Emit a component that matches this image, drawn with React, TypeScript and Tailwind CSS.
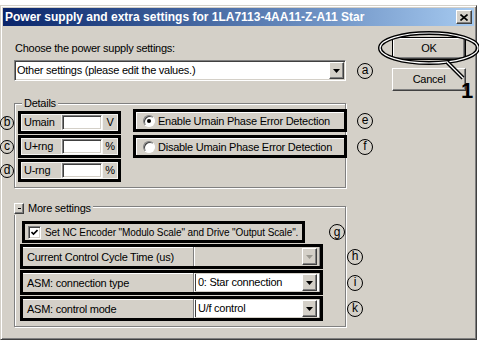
import React from 'react';

// classic 3D borders
const raised =
    'border border-t-white border-l-white border-b-[#404040] border-r-[#404040] shadow-[inset_-1px_-1px_0_#808080,inset_1px_1px_0_#d4d0c8]';
const sunken =
    'border border-t-[#808080] border-l-[#808080] border-b-white border-r-white shadow-[inset_1px_1px_0_#404040,inset_-1px_-1px_0_#d4d0c8]';
const etched = 'border border-[#808080] shadow-[1px_1px_0_#ffffff,inset_1px_1px_0_#ffffff]';

const Mark = ({ c, small }: { c: string; small?: boolean }) => (
    <div
        className={`${small ? 'w-[14px] h-[14px]' : 'w-[16px] h-[16px]'} shrink-0 rounded-full border border-black flex items-center justify-center text-[12px] tracking-normal leading-none pb-[1px]`}
    >
        {c}
    </div>
);

const Arrow = ({ disabled }: { disabled?: boolean }) => (
    <div className={`w-[15px] h-[17px] shrink-0 bg-[#d4d0c8] flex items-center justify-center ${raised}`}>
        <svg width="7" height="4" viewBox="0 0 7 4">
            <path d="M0 0h7L3.5 4z" fill={disabled ? '#9a9890' : '#000'} />
        </svg>
    </div>
);

const detailRows = [
    { mark: 'b', label: 'Umain', unit: 'V' },
    { mark: 'c', label: 'U+rng', unit: '%' },
    { mark: 'd', label: 'U-rng', unit: '%' }
];

const radios = [
    { mark: 'e', label: 'Enable Umain Phase Error Detection', checked: true },
    { mark: 'f', label: 'Disable Umain Phase Error Detection', checked: false }
];

const tableRows = [
    { mark: 'h', label: 'Current Control Cycle Time (us)', value: '', disabled: true },
    { mark: 'i', label: 'ASM: connection type', value: '0: Star connection', disabled: false },
    { mark: 'k', label: 'ASM: control mode', value: 'U/f control', disabled: false }
];

export default function App() {
    return (
        <div className="relative w-[479px] h-[344px] bg-white pt-[5px] overflow-hidden font-['Liberation_Sans',Arial,sans-serif] text-[11px] tracking-[-0.25px] text-black">
            <div className="w-[477px] h-[335px] bg-[#d4d0c8] p-[2px] border border-t-[#d4d0c8] border-l-[#d4d0c8] border-b-[#404040] border-r-[#404040] shadow-[inset_1px_1px_0_#ffffff,inset_-1px_-1px_0_#808080]">
                {/* title bar */}
                <div className="h-[18px] bg-linear-to-r from-[#0a246a] to-[#a6caf0] flex items-center justify-between pl-[2px] pr-[2px]">
                    <span className="text-white font-bold text-[12px] tracking-normal leading-none">
                        Power supply and extra settings for 1LA7113-4AA11-Z-A11 Star
                    </span>
                    <div className={`w-[16px] h-[14px] bg-[#d4d0c8] flex items-center justify-center ${raised}`}>
                        <svg width="8" height="7" viewBox="0 0 8 7">
                            <path d="M0.5 0.5L7.5 6.5M7.5 0.5L0.5 6.5" stroke="#000" strokeWidth="1.6" />
                        </svg>
                    </div>
                </div>

                <div className="flex">
                    {/* main column */}
                    <div className="ml-[11px] w-[359px] flex flex-col">
                        <div className="mt-[16px] pl-[1px] h-[13px] leading-[13px]">Choose the power supply settings:</div>

                        <div className="mt-[5px] flex items-center">
                            <div className={`w-[332px] h-[21px] bg-white flex items-center justify-between pl-[2px] pr-[1px] ${sunken}`}>
                                <span>Other settings (please edit the values.)</span>
                                <Arrow />
                            </div>
                            <div className="ml-[11px]">
                                <Mark c="a" />
                            </div>
                        </div>

                        {/* Details */}
                        <div className={`relative mt-[22px] w-[332px] h-[85px] ${etched}`}>
                            <div className="absolute -top-[7px] left-[7px] px-[2px] bg-[#d4d0c8] leading-[13px]">Details</div>
                            <div className="flex pt-[7px]">
                                <div className="-ml-[15px] flex flex-col gap-[1px]">
                                    {detailRows.map((r) => (
                                        <div key={r.mark} className="flex items-center gap-[4px]">
                                            <Mark c={r.mark} small />
                                            <div className="w-[103px] h-[23px] border-[3px] border-black bg-[#f4f3f0] p-[1px] flex gap-[1px]">
                                                <div className="w-[39px] bg-[#d4d0c8] flex items-center pl-[2px]">{r.label}</div>
                                                <div className={`w-[40px] bg-white ${sunken}`} />
                                                <div className="flex-1 bg-[#d4d0c8] flex items-center justify-center">{r.unit}</div>
                                            </div>
                                        </div>
                                    ))}
                                </div>
                                <div className="ml-[12px] -mt-[2px] flex flex-col gap-[3px]">
                                    {radios.map((r) => (
                                        <div key={r.mark} className="flex items-center gap-[10px]">
                                            <div className="w-[214px] h-[23px] border-[3px] border-black">
                                                <div className="h-full bg-[#d4d0c8] border-t border-l border-t-white border-l-white flex items-center gap-[3px] pl-[6px]">
                                                    <div className="w-[12px] h-[12px] rounded-full bg-white border border-t-[#808080] border-l-[#808080] border-b-white border-r-white shadow-[inset_1px_1px_0_#404040] flex items-center justify-center">
                                                        {r.checked && <div className="w-[4px] h-[4px] rounded-full bg-black" />}
                                                    </div>
                                                    <span>{r.label}</span>
                                                </div>
                                            </div>
                                            <Mark c={r.mark} />
                                        </div>
                                    ))}
                                </div>
                            </div>
                        </div>

                        {/* More settings */}
                        <div className={`relative mt-[18px] w-[332px] h-[121px] ${etched}`}>
                            <div className="absolute -top-[5px] -left-[1px] flex items-center gap-[4px] bg-[#d4d0c8] pr-[2px]">
                                <div className={`w-[10px] h-[11px] bg-[#d4d0c8] flex items-center justify-center ${raised}`}>
                                    <div className="w-[3px] h-px bg-black" />
                                </div>
                                <span className="leading-[13px]">More settings</span>
                            </div>
                            <div className="pt-[14px] pl-[7px] flex flex-col">
                                <div className="flex items-center">
                                    <div className="w-[311px] h-[22px] border-[3px] border-black bg-[#d4d0c8] flex items-center gap-[4px] pl-[3px] whitespace-nowrap">
                                        <div className={`w-[13px] h-[13px] shrink-0 bg-white flex items-center justify-center ${sunken}`}>
                                            <svg width="7" height="7" viewBox="0 0 7 7">
                                                <path d="M0.5 3L2.5 5L6.5 1" stroke="#000" strokeWidth="1.6" fill="none" />
                                            </svg>
                                        </div>
                                        <span className="text-[10px] tracking-[-0.1px]">
                                            Set NC Encoder "Modulo Scale" and Drive "Output Scale".
                                        </span>
                                    </div>
                                    <div className="ml-[24px]">
                                        <Mark c="g" />
                                    </div>
                                </div>
                                <div className="mt-[1px] -ml-[2px] flex flex-col gap-[1px]">
                                    {tableRows.map((r) => (
                                        <div key={r.mark} className="flex items-center">
                                            <div className="w-[313px] h-[25px] border-[3px] border-black bg-[#d4d0c8] flex">
                                                <div className="w-[170px] border-t border-t-white flex items-center pl-[4px]">{r.label}</div>
                                                <div className="w-[126px] border-l border-l-[#808080] shadow-[inset_1px_0_0_#ffffff] py-[1px] pl-[1px]">
                                                    <div
                                                        className={`h-full flex items-center justify-between pl-[2px] pr-[2px] ${r.disabled ? 'bg-[#d4d0c8]' : 'bg-white border-l border-l-[#404040]'}`}
                                                    >
                                                        <span>{r.value}</span>
                                                        <Arrow disabled={r.disabled} />
                                                    </div>
                                                </div>
                                                <div className="flex-1 border-l border-l-[#808080] shadow-[inset_1px_0_0_#ffffff]" />
                                            </div>
                                            <div className="ml-[24px]">
                                                <Mark c={r.mark} />
                                            </div>
                                        </div>
                                    ))}
                                </div>
                            </div>
                        </div>
                    </div>

                    {/* buttons */}
                    <div className="ml-[19px] w-[74px] flex flex-col pt-[11px]">
                        <div className="h-[23px] border border-black">
                            <div className={`h-full bg-[#d4d0c8] flex items-center justify-center ${raised}`}>OK</div>
                        </div>
                        <div className={`mt-[8px] h-[23px] bg-[#d4d0c8] flex items-center justify-center ${raised}`}>Cancel</div>
                    </div>
                </div>
            </div>

            {/* callout annotation */}
            <svg className="absolute inset-0 pointer-events-none" width="479" height="344">
                <ellipse cx="429" cy="48" rx="49" ry="15" fill="none" stroke="#000" strokeWidth="4" />
                <ellipse cx="429" cy="48" rx="49" ry="15" fill="none" stroke="#fff" strokeWidth="1.2" />
                <line x1="447" y1="62" x2="463" y2="78" stroke="#000" strokeWidth="4" />
                <line x1="447" y1="62" x2="463" y2="78" stroke="#fff" strokeWidth="1.2" />
            </svg>
            <div className="absolute left-[461px] top-[80px] font-bold text-[22px] leading-none">1</div>
        </div>
    );
}
